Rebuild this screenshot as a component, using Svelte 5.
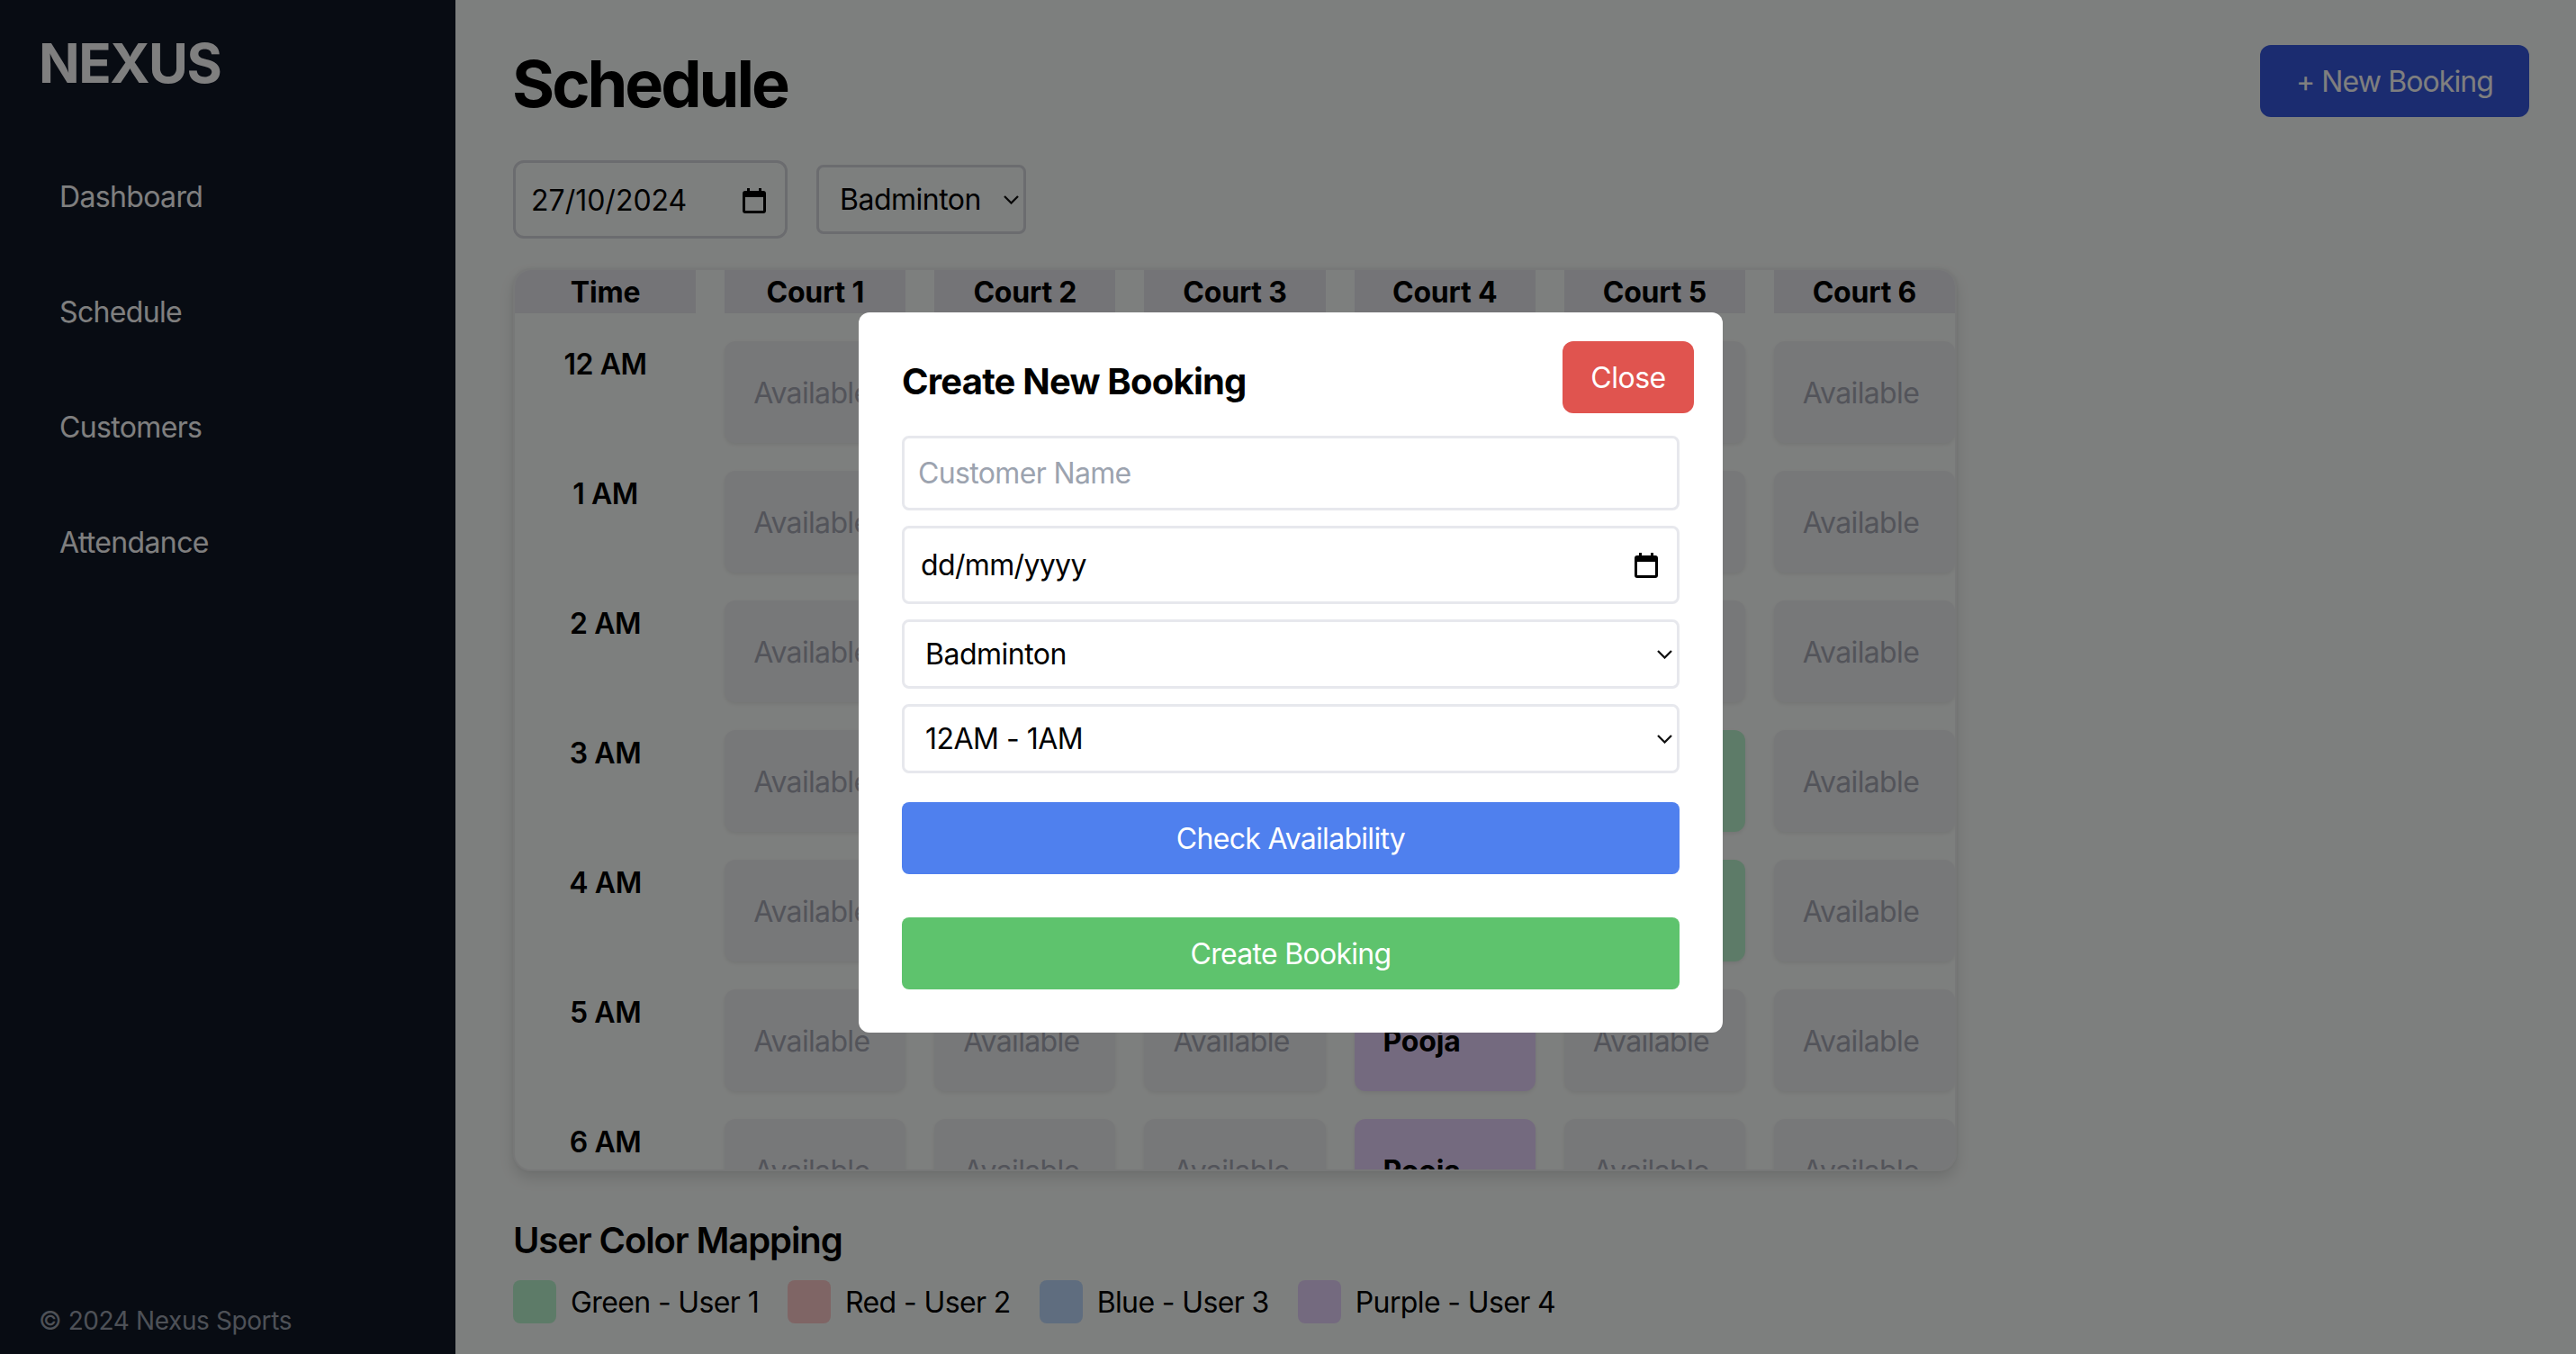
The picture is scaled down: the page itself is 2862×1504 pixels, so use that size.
<script>
  const courts = ['Court 1', 'Court 2', 'Court 3', 'Court 4', 'Court 5', 'Court 6'];
  const hours = ['12 AM', '1 AM', '2 AM', '3 AM', '4 AM', '5 AM', '6 AM', '7 AM'];
  const booked = { '3-4': ['Rahul', 'green'], '4-4': ['Rahul', 'green'], '5-3': ['Pooja', 'purple'], '6-3': ['Pooja', 'purple'] };
  const legend = [
    ['green', 'Green - User 1'],
    ['red', 'Red - User 2'],
    ['blue', 'Blue - User 3'],
    ['purple', 'Purple - User 4']
  ];
  const nav = ['Dashboard', 'Schedule', 'Customers', 'Attendance'];
</script>

{#snippet calendar()}
  <svg class="cal" viewBox="0 0 26 28" aria-hidden="true">
    <path d="M5 0h3v3h10V0h3v3h2a3 3 0 0 1 3 3v19a3 3 0 0 1-3 3H3a3 3 0 0 1-3-3V6a3 3 0 0 1 3-3h2z" fill="currentColor" />
    <rect x="3" y="10" width="20" height="15" fill="var(--cal-bg)" />
  </svg>
{/snippet}

{#snippet chevron()}
  <svg class="chev" viewBox="0 0 17 10" aria-hidden="true">
    <path d="M1 1l7.5 7.5L16 1" fill="none" stroke="currentColor" stroke-width="2.3" />
  </svg>
{/snippet}

<div class="page">
  <aside class="side">
    <div class="logo">NEXUS</div>
    <nav>
      {#each nav as n}<a href="#{n}">{n}</a>{/each}
    </nav>
    <div class="copy">© 2024 Nexus Sports</div>
  </aside>

  <main>
    <header>
      <h1>Schedule</h1>
      <button class="new">+ New Booking</button>
    </header>

    <div class="filters">
      <div class="field date-filter"><span>27/10/2024</span>{@render calendar()}</div>
      <div class="sel sport-filter"><select><option>Badminton</option></select>{@render chevron()}</div>
    </div>

    <div class="table">
      <div class="grid">
        <div class="th">Time</div>
        {#each courts as c}<div class="th">{c}</div>{/each}
        {#each hours as h, r}
          <div class="time">{h}</div>
          {#each courts as _, c}
            {@const b = booked[r + '-' + c]}
            {#if b}
              <div class="cell {b[1]}"><b>{b[0]}</b></div>
            {:else}
              <div class="cell">Available</div>
            {/if}
          {/each}
        {/each}
      </div>
    </div>

    <h2>User Color Mapping</h2>
    <div class="legend">
      {#each legend as [k, t]}
        <div class="item"><span class="sw {k}"></span><span>{t}</span></div>
      {/each}
    </div>
  </main>

  <div class="overlay">
    <div class="modal">
      <button class="close">Close</button>
      <h3>Create New Booking</h3>
      <input class="name" placeholder="Customer Name" />
      <div class="field date-modal"><span>dd/mm/yyyy</span>{@render calendar()}</div>
      <div class="sel modal-sel"><select><option>Badminton</option></select>{@render chevron()}</div>
      <div class="sel modal-sel"><select><option>12AM - 1AM</option></select>{@render chevron()}</div>
      <button class="wide check">Check Availability</button>
      <button class="wide create">Create Booking</button>
    </div>
  </div>
</div>

<style>
  :global(body) {
    margin: 0;
    background: #fbfefc;
    font-family: Inter, "Liberation Sans", sans-serif;
    color: #000;
    letter-spacing: -0.65px;
    -webkit-font-smoothing: antialiased;
  }
  button, input, select { letter-spacing: -0.65px; }
  .page {
    display: flex;
    width: 2862px;
    height: 1504px;
    overflow: hidden;
    position: relative;
  }
  .side {
    width: 506px;
    flex: none;
    background: #111827;
    color: #fff;
    display: flex;
    flex-direction: column;
    box-sizing: border-box;
    padding: 32px 43px 17px;
  }
  .logo { font-size: 60px; font-weight: 700; line-height: 76px; letter-spacing: -1.5px; }
  nav { display: flex; flex-direction: column; margin-top: 46px; }
  nav a {
    height: 128px;
    display: flex;
    align-items: center;
    padding-left: 23px;
    font-size: 32px;
    color: #fff;
    text-decoration: none;
  }
  .copy { margin-top: auto; font-size: 28px; line-height: 40px; color: #9ca3af; letter-spacing: -0.4px; }

  main { flex: 1; min-width: 0; padding: 50px 52px 0 64px; }
  header { display: flex; justify-content: space-between; align-items: center; height: 80px; }
  h1 { margin: 0 0 0 -1px; padding-top: 6px; font-size: 72px; font-weight: 700; line-height: 80px; letter-spacing: -3px; }
  .new {
    width: 299px; height: 80px;
    background: #3659e0; color: #fff; border: 0; border-radius: 12px;
    font: 32px Inter, sans-serif;
    letter-spacing: -0.9px;
    padding-top: 2px;
  }
  .filters { display: flex; align-items: center; gap: 32px; margin-top: 48px; }
  .field {
    --cal-bg: #fff;
    box-sizing: border-box;
    border: 3px solid #e7e8ed;
    border-radius: 8px;
    display: flex;
    justify-content: space-between;
    align-items: center;
    font-size: 32px;
    background: #fff;
  }
  .date-filter {
    --cal-bg: #fbfefc;
    width: 305px; height: 87px;
    padding: 2px 21px 0 17px;
    background: transparent;
    border-color: #d6d8de;
    border-radius: 12px;
    letter-spacing: 0;
  }
  .cal { width: 26px; height: 28px; color: #000; display: block; }
  .sel { position: relative; box-sizing: border-box; }
  .sel select {
    appearance: none;
    width: 100%; height: 100%;
    box-sizing: border-box;
    border: 3px solid #e7e8ed;
    border-radius: 8px;
    background: transparent;
    font: 32px Inter, sans-serif;
    letter-spacing: -0.5px;
    color: #000;
    padding: 0 0 0 23px;
  }
  .chev {
    position: absolute;
    right: 8px;
    top: 50%;
    width: 17px;
    height: 10px;
    margin-top: -5px;
    color: #111;
  }
  .sport-filter { width: 233px; height: 77px; }
  .sport-filter select { border-color: #d6d8de; padding-left: 23px; }

  .table {
    box-sizing: border-box;
    margin-top: 33px;
    height: 1003px;
    width: 1604px;
    overflow: hidden;
    border: 2px solid #eff0f0;
    border-radius: 20px;
    background: #fbfefc;
    box-shadow: 0 8px 16px rgba(0,0,0,.12), 0 0 4px rgba(0,0,0,.05);
  }
  .grid {
    display: grid;
    grid-template-columns: repeat(7, 1fr);
    column-gap: 32px;
    row-gap: 31px;
  }
  .th {
    height: 48px; background: #e8e9ee;
    display: flex; align-items: center; justify-content: center;
    font-size: 32px; font-weight: 700;
    letter-spacing: -0.2px;
  }
  .time {
    box-sizing: border-box;
    padding-top: 2px;
    font-size: 32px; font-weight: 600; line-height: 48px; text-align: center; height: 113px;
    letter-spacing: -0.4px;
  }
  .cell {
    box-sizing: border-box;
    height: 113px;
    padding: 2px 0 0 32px;
    background: #eff0f3;
    border-radius: 12px;
    display: flex; align-items: center;
    font-size: 32px;
    color: #a6a9b5;
    box-shadow: 0 2px 4px rgba(0,0,0,.08);
  }
  .cell b { color: #000; font-weight: 700; letter-spacing: -0.2px; }
  .cell.green, .sw.green { background: #bbf7d0; }
  .cell.purple, .sw.purple { background: #e9d5ff; }
  .sw.red { background: #fecaca; }
  .sw.blue { background: #bfdbfe; }

  h2 { margin: 49px 0 0; font-size: 40px; font-weight: 600; line-height: 56px; letter-spacing: -1.1px; }
  .legend { display: flex; gap: 32px; margin-top: 16px; }
  .item { display: flex; align-items: center; gap: 16px; font-size: 32px; letter-spacing: -0.62px; }
  .sw { width: 48px; height: 48px; border-radius: 8px; }

  .overlay {
    position: absolute;
    inset: 0;
    background: rgba(0,0,0,.5);
  }
  .modal {
    position: absolute;
    left: 954px;
    top: 347px;
    width: 960px;
    height: 800px;
    box-sizing: border-box;
    background: #fff;
    border-radius: 12px;
    padding: 48px;
    display: flex;
    flex-direction: column;
  }
  .close {
    position: absolute; top: 32px; right: 32px;
    width: 146px; height: 80px;
    background: #e0544f; color: #fff; border: 0; border-radius: 12px;
    font: 32px Inter, sans-serif;
    letter-spacing: -0.5px;
  }
  h3 { margin: 0; padding-top: 2px; height: 56px; box-sizing: border-box; font-size: 40px; font-weight: 700; line-height: 54px; letter-spacing: -0.8px; }
  .name {
    box-sizing: border-box;
    height: 83px; margin-top: 33px;
    border: 3px solid #e7e8ed; border-radius: 8px;
    font: 32px Inter, sans-serif;
    letter-spacing: -0.65px;
    padding: 0 15px;
    outline: 0;
  }
  .name::placeholder { color: #9ca3af; }
  .date-modal { height: 87px; margin-top: 17px; padding: 0 21px 0 18px; }
  .modal-sel { height: 77px; margin-top: 17px; }
  .wide {
    height: 80px; margin-top: 32px;
    border: 0; border-radius: 8px; color: #fff;
    font: 32px Inter, sans-serif;
    letter-spacing: -0.7px;
  }
  .check { background: #4f80ee; }
  .create { background: #5ec36d; margin-top: 48px; }
</style>
